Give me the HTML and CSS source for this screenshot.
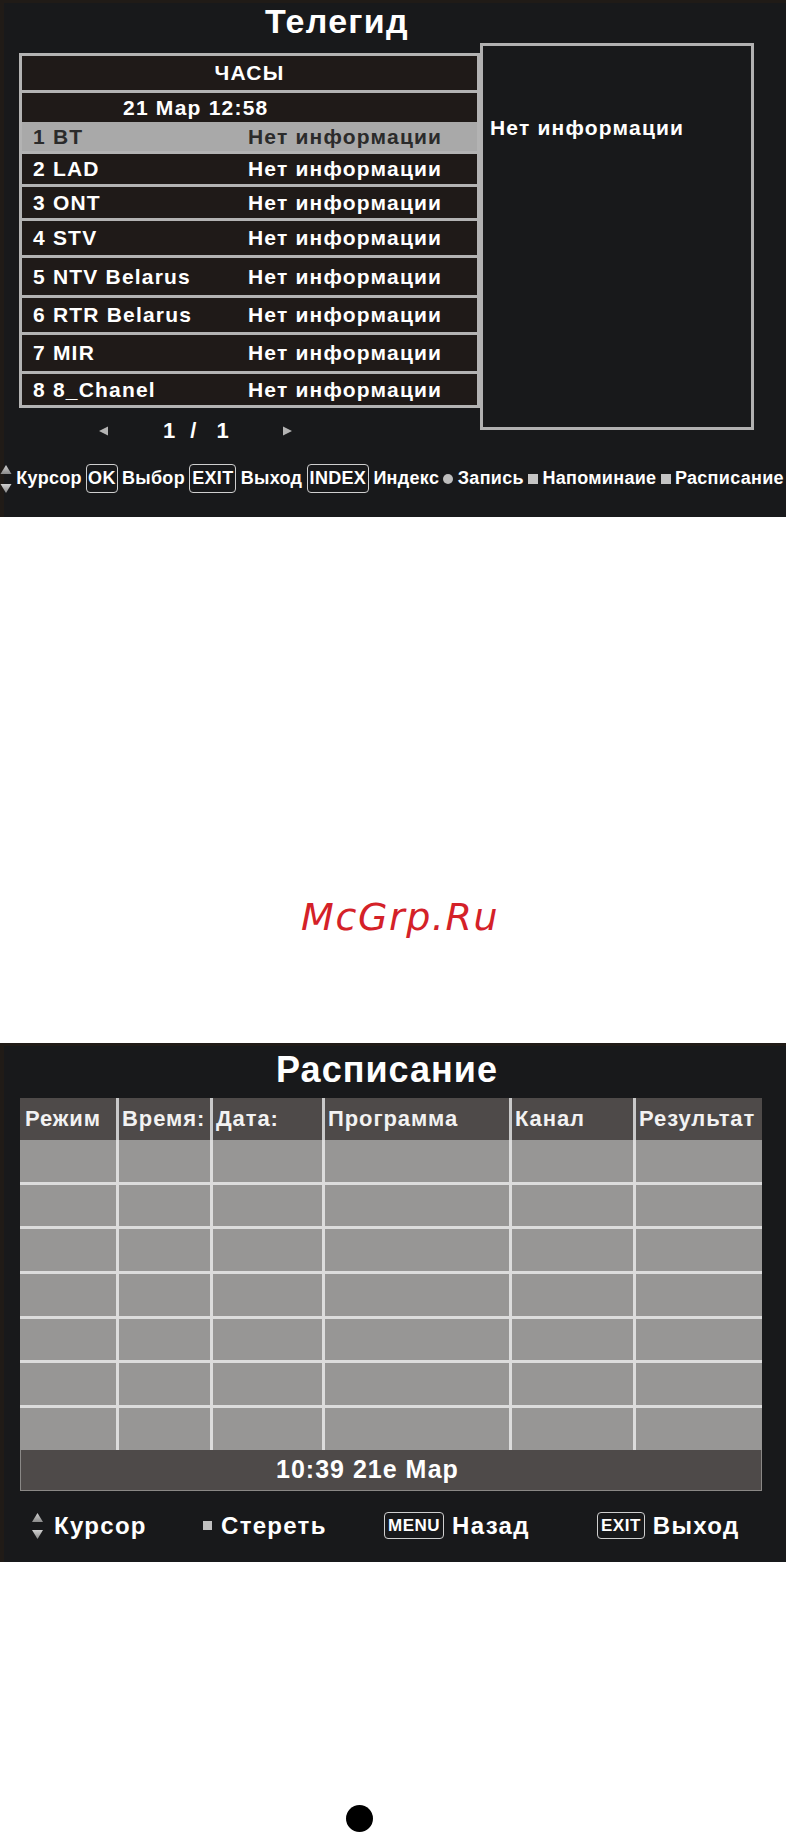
FILE: index.html
```html
<!DOCTYPE html>
<html lang="ru">
<head>
<meta charset="utf-8">
<title>Телегид</title>
<link rel="stylesheet" href="styles.css">
</head>
<body>
<section class="panel guide">
  <h1 class="guide-title">Телегид</h1>
  <div class="guide-body">
    <div class="guide-left">
      <div class="chan-table">
        <div class="t-head">ЧАСЫ</div>
        <div class="t-date">21 Мар 12:58</div>
        <div class="rows">
          <div class="row sel"><span>1 BT</span><span>Нет информации</span></div>
          <div class="row"><span>2 LAD</span><span>Нет информации</span></div>
          <div class="row"><span>3 ONT</span><span>Нет информации</span></div>
          <div class="row"><span>4 STV</span><span>Нет информации</span></div>
          <div class="row"><span>5 NTV Belarus</span><span>Нет информации</span></div>
          <div class="row"><span>6 RTR Belarus</span><span>Нет информации</span></div>
          <div class="row"><span>7 MIR</span><span>Нет информации</span></div>
          <div class="row"><span>8 8_Chanel</span><span>Нет информации</span></div>
        </div>
      </div>
      <div class="pager">
        <svg class="tri" width="10" height="10" viewBox="0 0 10 10"><polygon points="10,0.5 10,9.5 1,5" fill="#b3b3b3"/></svg>
        <span class="pg-num first">1</span>
        <span class="pg-slash">/</span>
        <span class="pg-num">1</span>
        <svg class="tri right" width="10" height="10" viewBox="0 0 10 10"><polygon points="0,0.5 0,9.5 9,5" fill="#b3b3b3"/></svg>
      </div>
    </div>
    <div class="info-box">Нет информации</div>
  </div>
  <div class="hints">
    <svg class="updown" width="12" height="30" viewBox="0 0 12 30">
      <defs><linearGradient id="g1" x1="0" y1="0" x2="0" y2="1"><stop offset="0" stop-color="#d0d0d0"/><stop offset="1" stop-color="#8a8a8a"/></linearGradient></defs>
      <polygon points="6,1 11.5,10 0.5,10" fill="url(#g1)"/>
      <polygon points="0.5,20 11.5,20 6,29" fill="url(#g1)"/>
    </svg>
    <span class="h-txt">Курсор</span>
    <span class="key k-ok">OK</span>
    <span class="h-txt">Выбор</span>
    <span class="key">EXIT</span>
    <span class="h-txt">Выход</span>
    <span class="key">INDEX</span>
    <span class="h-txt">Индекс</span>
    <span class="dot-btn"></span>
    <span class="h-txt">Запись</span>
    <span class="sq-btn"></span>
    <span class="h-txt">Напоминаие</span>
    <span class="sq-btn"></span>
    <span class="h-txt">Расписание</span>
  </div>
</section>

<div class="between">
  <p class="watermark">McGrp.Ru</p>
</div>

<section class="panel sched">
  <h2 class="sched-title">Расписание</h2>
  <div class="sched-table">
    <div class="s-head">
      <div class="s-th">Режим</div>
      <div class="s-th">Время:</div>
      <div class="s-th">Дата:</div>
      <div class="s-th">Программа</div>
      <div class="s-th">Канал</div>
      <div class="s-th">Результат</div>
    </div>
    <div class="s-body">
      <div class="s-td"></div><div class="s-td"></div><div class="s-td"></div><div class="s-td"></div><div class="s-td"></div><div class="s-td"></div>
      <div class="s-td"></div><div class="s-td"></div><div class="s-td"></div><div class="s-td"></div><div class="s-td"></div><div class="s-td"></div>
      <div class="s-td"></div><div class="s-td"></div><div class="s-td"></div><div class="s-td"></div><div class="s-td"></div><div class="s-td"></div>
      <div class="s-td"></div><div class="s-td"></div><div class="s-td"></div><div class="s-td"></div><div class="s-td"></div><div class="s-td"></div>
      <div class="s-td"></div><div class="s-td"></div><div class="s-td"></div><div class="s-td"></div><div class="s-td"></div><div class="s-td"></div>
      <div class="s-td"></div><div class="s-td"></div><div class="s-td"></div><div class="s-td"></div><div class="s-td"></div><div class="s-td"></div>
      <div class="s-td"></div><div class="s-td"></div><div class="s-td"></div><div class="s-td"></div><div class="s-td"></div><div class="s-td"></div>
    </div>
    <div class="s-date">10:39 21е Мар</div>
  </div>
  <div class="s-hints">
    <div class="grp">
      <svg class="updown2" width="13" height="28" viewBox="0 0 13 28">
        <defs><linearGradient id="g2" x1="0" y1="0" x2="0" y2="1"><stop offset="0" stop-color="#d0d0d0"/><stop offset="1" stop-color="#8a8a8a"/></linearGradient></defs>
        <polygon points="6.5,1 12,10 1,10" fill="url(#g2)"/>
        <polygon points="1,18 12,18 6.5,27" fill="url(#g2)"/>
      </svg>
      <span class="s-txt">Курсор</span>
    </div>
    <div class="grp">
      <span class="sq2"></span>
      <span class="s-txt">Стереть</span>
    </div>
    <div class="grp">
      <span class="key2">MENU</span>
      <span class="s-txt">Назад</span>
    </div>
    <div class="grp">
      <span class="key2">EXIT</span>
      <span class="s-txt">Выход</span>
    </div>
  </div>
</section>

<div class="after">
  <div class="bullet"></div>
</div>
</body>
</html>
```

FILE: styles.css
```css
* { box-sizing: border-box; margin: 0; padding: 0; }

body {
  margin: 0;
  width: 786px;
  background: #ffffff;
  font-family: "Liberation Sans", Arial, sans-serif;
}

.panel {
  width: 786px;
  background: #18191b;
  color: #ffffff;
  box-shadow: inset 4px 3px 0 #201b17;
}

/* ---------- Телегид ---------- */
.guide {
  height: 517px;
  padding-top: 2px;
}

.guide-title {
  font-size: 34px;
  font-weight: bold;
  line-height: 38px;
  letter-spacing: 1.3px;
  text-align: center;
  padding-right: 112px;
}

.guide-body {
  display: flex;
  align-items: flex-start;
  margin-top: 3px;
  padding-left: 19px;
}

.guide-left {
  width: 461px;
  margin-top: 10px;
}

.chan-table {
  border: 3px solid #b3b3b3;
  background: #b3b3b3;
  display: flex;
  flex-direction: column;
}

.t-head,
.t-date,
.row {
  background: #1f1a18;
  font-size: 21px;
  font-weight: bold;
  letter-spacing: 1.2px;
}

.t-head {
  height: 34px;
  display: flex;
  align-items: center;
  justify-content: center;
  margin-bottom: 3px;
}

.t-date {
  height: 29px;
  display: flex;
  align-items: center;
  padding-left: 101px;
}

.rows {
  display: flex;
  flex-direction: column;
  gap: 3px;
}

.row {
  display: grid;
  grid-template-columns: 215px 1fr;
  align-items: center;
  padding-left: 11px;
  height: 31px;
  white-space: nowrap;
}

.row:nth-child(1) { height: 29px; }
.row:nth-child(2) { height: 30px; }
.row:nth-child(3) { height: 31px; }
.row:nth-child(4) { height: 34px; }
.row:nth-child(5) { height: 37px; }
.row:nth-child(6) { height: 34px; }
.row:nth-child(7) { height: 36px; }
.row:nth-child(8) { height: 31px; }

.row.sel {
  background: #a9a9a9;
  color: #2b2b2b;
}

.pager {
  height: 46px;
  display: flex;
  align-items: center;
  padding-left: 79px;
  font-size: 22px;
  color: #ffffff;
}

.pager .tri { display: block; }
.pg-num.first { margin-left: 55px; }
.pg-slash { margin-left: 15px; font-weight: bold; }
.pg-num { font-weight: bold; }
.pg-slash + .pg-num { margin-left: 20px; }
.tri.right { margin-left: 54px; }

.info-box {
  width: 274px;
  height: 387px;
  border: 3px solid #b1b1b1;
  padding: 70px 0 0 7px;
  font-size: 21px;
  font-weight: bold;
  letter-spacing: 1.2px;
  white-space: nowrap;
}

.hints {
  margin-top: 9px;
  height: 31px;
  width: 784px;
  display: flex;
  align-items: center;
  justify-content: space-between;
  font-size: 18px;
  font-weight: bold;
  letter-spacing: 0.3px;
  white-space: nowrap;
}

.updown { display: block; }

.key {
  display: inline-flex;
  align-items: center;
  height: 29px;
  padding: 0 2px;
  border: 1.5px solid #cfcfcf;
  border-radius: 4px;
  font-size: 18px;
  font-weight: bold;
}

.k-ok { padding: 0 1px; }

.dot-btn {
  width: 10px;
  height: 10px;
  border-radius: 50%;
  background: #bdbdbd;
}

.sq-btn {
  width: 10px;
  height: 10px;
  background: #c4c4c4;
}

/* ---------- between ---------- */
.between {
  height: 526px;
  padding-top: 378px;
  padding-left: 301px;
}

.watermark {
  font-family: "DejaVu Sans", sans-serif;
  font-style: italic;
  font-size: 38px;
  letter-spacing: 1.6px;
  color: #d42128;
}

/* ---------- Расписание ---------- */
.sched {
  height: 519px;
  padding-top: 7px;
}

.sched-title {
  font-size: 36px;
  font-weight: bold;
  line-height: 40px;
  letter-spacing: 1px;
  text-align: center;
  padding-right: 12px;
}

.sched-table {
  margin: 8px 0 0 20px;
  width: 742px;
}

.s-head,
.s-body {
  display: grid;
  grid-template-columns: 96px 91px 109px 184px 121px 1fr;
  column-gap: 3px;
}

.s-head {
  background: #c9c9c9;
  height: 42px;
}

.s-th {
  background: #4e4a49;
  display: flex;
  align-items: center;
  padding-left: 3px;
  font-size: 22px;
  font-weight: bold;
  letter-spacing: 0.9px;
  white-space: nowrap;
  color: #f2f2f2;
}

.s-th:first-child { padding-left: 5px; }

.s-body {
  background: #dcdcdc;
  row-gap: 3px;
  grid-auto-rows: 41.7px;
}

.s-td { background: #979695; }

.s-date {
  height: 41px;
  background: #4e4a49;
  border: 1px solid #8a8886;
  border-top: none;
  display: flex;
  align-items: center;
  padding-left: 255px;
  font-size: 25px;
  font-weight: bold;
  letter-spacing: 1px;
}

.s-hints {
  margin-top: 14px;
  height: 42px;
  display: grid;
  grid-template-columns: 172px 181px 213px auto;
  align-items: center;
  padding-left: 31px;
  font-size: 24px;
  font-weight: bold;
  letter-spacing: 1.3px;
  white-space: nowrap;
}

.grp {
  display: flex;
  align-items: center;
}

.updown2 { display: block; margin-right: 10px; }

.sq2 {
  width: 9px;
  height: 9px;
  background: #c0c0c0;
  margin-right: 9px;
}

.key2 {
  display: inline-flex;
  align-items: center;
  height: 27px;
  padding: 0 3px;
  border: 1.5px solid #cfcfcf;
  border-radius: 4px;
  font-size: 17px;
  letter-spacing: 0.5px;
  margin-right: 8px;
}

/* ---------- after ---------- */
.after {
  height: 270px;
  padding-top: 243px;
  padding-left: 346px;
}

.bullet {
  width: 27px;
  height: 27px;
  border-radius: 50%;
  background: #000000;
}
```
